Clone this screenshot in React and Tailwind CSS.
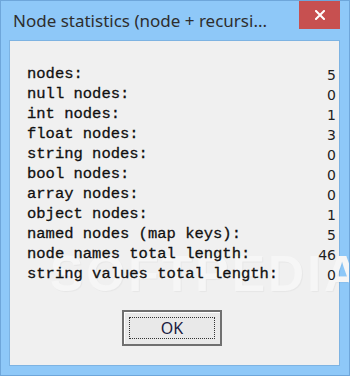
import React from "react";

const rows = [
  ["nodes:", "5"],
  ["null nodes:", "0"],
  ["int nodes:", "1"],
  ["float nodes:", "3"],
  ["string nodes:", "0"],
  ["bool nodes:", "0"],
  ["array nodes:", "0"],
  ["object nodes:", "1"],
  ["named nodes (map keys):", "5"],
  ["node names total length:", "46"],
  ["string values total length:", "0"],
];

export default function App() {
  return (
    <div className="relative w-[350px] h-[376px] bg-[#8ec8f8] border border-[#6ea6da] overflow-hidden">
      <div className="h-[39px] flex items-start">
        <div
          className="pl-[12px] pt-[8px] text-[17px] leading-[24px] text-[#2e2e2e] whitespace-nowrap"
          style={{ fontFamily: '"Noto Sans", "Open Sans", sans-serif' }}
        >
          Node statistics (node + recursi...
        </div>
      </div>
      <div className="absolute top-0 right-[9px] w-[41px] h-[28px] bg-[#c75050] flex items-center justify-center">
        <svg width="10" height="10" viewBox="0 0 10 10">
          <path d="M1 1 L9 9 M9 1 L1 9" stroke="#fff" strokeWidth="2" strokeLinecap="square" />
        </svg>
      </div>
      <div className="ml-[8px] w-[331px] h-[326px] bg-[#f0f0f0] border border-[#7db3e2] relative">
        <div
          className="absolute left-[40px] top-[196px] text-[50px] font-bold tracking-[3px] text-[#f6f6f6] select-none"
          style={{ fontFamily: '"Liberation Sans", sans-serif', textShadow: "1px 1px 1px rgba(0,0,0,0.04)" }}
        >
          SOFTPEDIA
        </div>
        <div className="relative pt-[24px] pl-[17px] pr-[3px]">
          {rows.map(([label, value]) => (
            <div key={label} className="flex justify-between h-[20px] items-center">
              <span
                className="text-[15.5px] text-[#111] whitespace-pre [-webkit-text-stroke:0.3px_#111]"
                style={{ fontFamily: '"Liberation Mono", "Courier New", monospace' }}
              >
                {label}
              </span>
              <span
                className="text-[14px] text-[#1e1e1e]"
                style={{ fontFamily: '"DejaVu Sans", Tahoma, sans-serif' }}
              >
                {value}
              </span>
            </div>
          ))}
        </div>
        <div className="relative mt-[25px] ml-[112px] w-[100px] h-[36px] border-2 border-[#707070] bg-[#e9e9e9] p-[5px] shadow-[inset_1px_1px_0_#fff]">
          <div
            className="w-full h-full border border-dotted border-[#333] flex items-center justify-center text-[16px] text-[#1a1a40]"
            style={{ fontFamily: '"Noto Sans", sans-serif' }}
          >
            OK
          </div>
        </div>
      </div>
    </div>
  );
}
